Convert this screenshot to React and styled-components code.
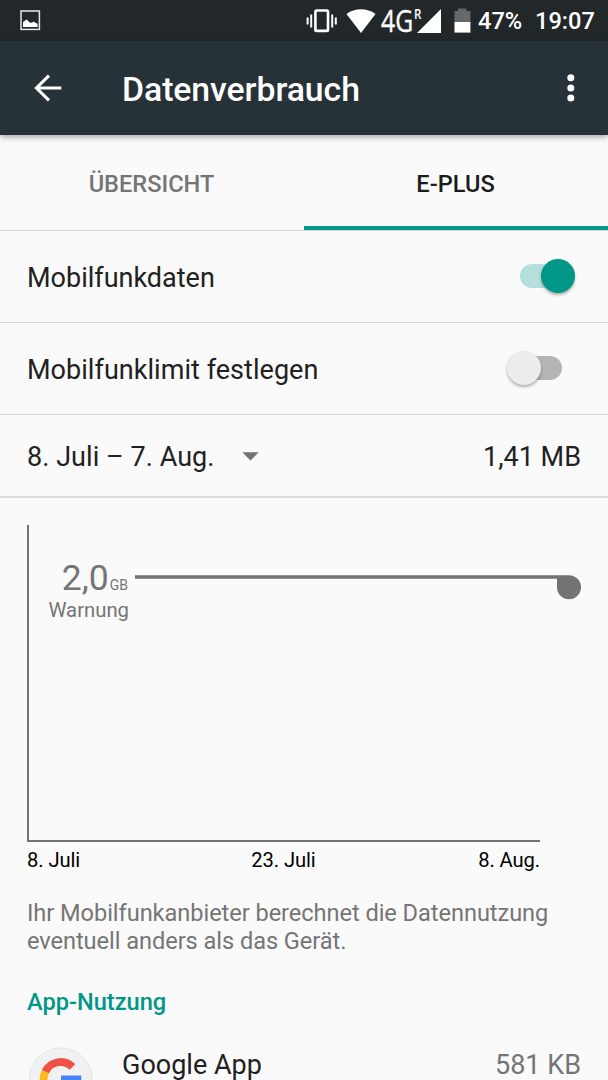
import React from "react";
import styled, { createGlobalStyle } from "styled-components";

const axisLabels = ["8. Juli", "23. Juli", "8. Aug."];

const App = () => {
  return (
    <>
      <GlobalStyle />
      <Screen>
        <StatusBar>
          <svg width="21" height="21" viewBox="0 0 21 21">
            <rect
              x="1"
              y="1"
              width="18.4"
              height="18.4"
              fill="none"
              stroke="#e6e7e7"
              strokeWidth="1.5"
            />
            <path
              d="M3 17V12L4.6 11L6.6 9.4L8.6 11.4L10.2 12.8L12.4 12.6L13.6 11.6L15.4 12.8L17.6 13.8V17Z"
              fill="#fff"
            />
          </svg>
          <StatusRight>
            <VibrateIcon />
            <WifiIcon />
            <Network>
              <Generation>4G</Generation>
              <Roaming>R</Roaming>
              <svg width="24" height="24" viewBox="0 0 24 24">
                <path d="M24 0V24H0Z" fill="#fff" />
              </svg>
            </Network>
            <BatteryIcon />
            <StatusText className="percent">47%</StatusText>
            <StatusText className="clock">19:07</StatusText>
          </StatusRight>
        </StatusBar>

        <Toolbar>
          <BackIcon width="28" height="28" viewBox="0 0 28 28">
            <path
              d="M15 1.6L2.4 14L15 26.4M2.4 14H27.4"
              fill="none"
              stroke="#fff"
              strokeWidth="3.1"
            />
          </BackIcon>
          <Title>Datenverbrauch</Title>
          <svg width="8" height="28" viewBox="0 0 8 28">
            <circle cx="3.8" cy="3.7" r="3.5" fill="#fff" />
            <circle cx="3.8" cy="13.9" r="3.5" fill="#fff" />
            <circle cx="3.8" cy="24" r="3.5" fill="#fff" />
          </svg>
        </Toolbar>

        <Tabs>
          <Tab>ÜBERSICHT</Tab>
          <Tab $active>E-PLUS</Tab>
        </Tabs>

        <Row>
          <RowText>Mobilfunkdaten</RowText>
          <Switch $on>
            <span />
          </Switch>
        </Row>
        <Row>
          <RowText $spacing="0.04px">Mobilfunklimit festlegen</RowText>
          <Switch>
            <span />
          </Switch>
        </Row>
        <CycleRow>
          <RowText $spacing="0.05px">8. Juli – 7. Aug.</RowText>
          <svg width="17" height="9" viewBox="0 0 17 9">
            <path d="M0.3 0.2H16.7L8.5 8.5Z" fill="#737373" />
          </svg>
          <Total>1,41 MB</Total>
        </CycleRow>

        <Chart>
          <Plot>
            <Limit>
              <LimitValue>
                2,0<small>GB</small>
              </LimitValue>
              <LimitName>Warnung</LimitName>
            </Limit>
            <Sweep width="446" height="25" viewBox="0 0 446 25">
              <path
                d="M0 0.3H434A12 12 0 1 1 422 12.3V3.7H0Z"
                fill="#737373"
              />
            </Sweep>
          </Plot>
          <Axis>
            {axisLabels.map((label) => (
              <span key={label}>{label}</span>
            ))}
          </Axis>
        </Chart>

        <Note>
          Ihr Mobilfunkanbieter berechnet die Datennutzung eventuell anders als
          das Gerät.
        </Note>
        <SectionTitle>App-Nutzung</SectionTitle>
        <AppRow>
          <GoogleIcon />
          <AppName>Google App</AppName>
          <AppUsage>581 KB</AppUsage>
        </AppRow>
      </Screen>
    </>
  );
};

const VibrateIcon = () => (
  <svg width="32" height="24" viewBox="0 0 32 24">
    <g fill="none" stroke="#fff">
      <rect x="9.4" y="1.5" width="12.6" height="20.4" rx="1.2" strokeWidth="2.6" />
      <path
        d="M1.6 8.5V15.5M5.2 5.5V18.5M26.2 5.5V18.5M29.8 8.5V15.5"
        strokeWidth="2"
      />
    </g>
  </svg>
);

const WifiIcon = () => (
  <svg className="wifi" width="30" height="24" viewBox="0 0 30 24">
    <path d="M0.5 5C9 -1.2 21 -1.2 29.5 5L15 24Z" fill="#fff" />
  </svg>
);

const BatteryIcon = () => (
  <svg className="battery" width="17" height="25" viewBox="0 0 17 25">
    <path d="M0.5 3H4V0.4H12.5V3H16.4V14H0.5Z" fill="#66696b" />
    <path d="M0.5 14H16.4V24.6H0.5Z" fill="#fff" />
  </svg>
);

const GoogleIcon = () => (
  <svg width="66" height="66" viewBox="0 0 66 66">
    <circle cx="32.7" cy="32.5" r="31.5" fill="#f1f1f1" stroke="#e6e6e6" />
    <g fill="none" strokeWidth="7.8">
      <path d="M17.4 39.4A17 17 0 0 1 17.4 24.6" stroke="#fbbc1a" />
      <path d="M17.4 24.6A17 17 0 0 1 44.6 19.9" stroke="#ef5145" />
      <path d="M44 44.7A17 17 0 0 1 17.4 39.4" stroke="#34a853" />
      <path d="M33 32.4H49.4A17 17 0 0 1 44 44.7" stroke="#4285f4" />
    </g>
  </svg>
);

export default App;

const GlobalStyle = createGlobalStyle`
  * {
    box-sizing: border-box;
  }
  body {
    margin: 0;
    background: #fafafa;
    font-family: Roboto, sans-serif;
  }
  svg {
    display: block;
    flex-shrink: 0;
  }
`;

const Screen = styled.div`
  width: 608px;
  height: 1080px;
  overflow: hidden;
  background: #fafafa;
  color: #212121;
`;

const StatusBar = styled.div`
  display: flex;
  align-items: center;
  justify-content: space-between;
  height: 41px;
  padding: 0 14px 0 20px;
  background: #22272a;
  color: #fff;
`;

const StatusRight = styled.div`
  display: flex;
  align-items: center;
  .wifi {
    margin-left: 8px;
  }
  .battery {
    margin: 0 7px 0 13px;
  }
  .percent {
    width: 57px;
  }
  .clock {
    width: 59px;
  }
`;

const StatusText = styled.span`
  font-size: 23.6px;
  font-weight: 500;
  line-height: 28px;
  margin-top: 1px;
  white-space: nowrap;
`;

const Network = styled.div`
  position: relative;
  display: flex;
  justify-content: flex-end;
  width: 65px;
`;

const Generation = styled.span`
  position: absolute;
  left: 5px;
  top: -8px;
  font-family: "Open Sans", sans-serif;
  font-size: 30.5px;
  line-height: 38px;
  -webkit-text-stroke: 0.4px #fff;
  transform: scaleX(0.81);
  transform-origin: left;
`;

const Roaming = styled.span`
  position: absolute;
  left: 38px;
  top: -3px;
  font-family: "Open Sans", sans-serif;
  font-size: 14px;
  font-weight: 600;
  line-height: 16px;
  transform: scaleX(0.83);
  transform-origin: left;
`;

const Toolbar = styled.div`
  position: relative;
  display: flex;
  align-items: center;
  height: 94px;
  padding: 0 33px;
  background: #273238;
  color: #fff;
  box-shadow: 0 2px 6px rgba(0, 0, 0, 0.35);
`;

const BackIcon = styled.svg`
  margin: 0 60px 0 1px;
`;

const Title = styled.h1`
  flex: 1;
  margin: 3px 0 0;
  font-size: 33.8px;
  font-weight: 500;
  line-height: 40px;
  letter-spacing: -0.07px;
`;

const Tabs = styled.div`
  display: flex;
  height: 96px;
  border-bottom: 1px solid #d6d6d6;
`;

const Tab = styled.div`
  flex: 1;
  padding: 35px 1px 0 0;
  font-size: 23.6px;
  font-weight: 500;
  line-height: 28px;
  text-align: center;
  color: ${(props) => (props.$active ? "#1c1c1c" : "#757575")};
  border-bottom: ${(props) => (props.$active ? "4px solid #009688" : "none")};
`;

const Row = styled.div`
  display: flex;
  align-items: center;
  justify-content: space-between;
  height: 92px;
  padding: 0 32px 0 27px;
  border-bottom: 1px solid #d6d6d6;
`;

const RowText = styled.span`
  margin-top: 2px;
  font-size: 27px;
  line-height: 32px;
  letter-spacing: ${(props) => props.$spacing || "normal"};
  white-space: nowrap;
`;

const Switch = styled.div`
  display: flex;
  align-items: center;
  justify-content: ${(props) => (props.$on ? "flex-end" : "flex-start")};
  width: 43px;
  height: 24px;
  margin: 0 ${(props) => (props.$on ? "13px" : "14px")} 1px 0;
  border-radius: 12px;
  background: ${(props) => (props.$on ? "#b5dfdb" : "#b4b6b5")};
  span {
    flex-shrink: 0;
    width: 34px;
    height: 34px;
    margin: ${(props) => (props.$on ? "0 -12px 0 0" : "0 0 0 -12px")};
    border-radius: 50%;
    background: ${(props) => (props.$on ? "#009688" : "#ececec")};
    box-shadow: 0 2px 3px rgba(0, 0, 0, 0.3);
  }
`;

const CycleRow = styled.div`
  display: flex;
  align-items: center;
  height: 83px;
  padding: 0 27px;
  border-bottom: 2px solid #dcdcdc;
  svg {
    margin: 2px 0 0 27px;
  }
`;

const Total = styled(RowText)`
  margin-left: auto;
`;

const Chart = styled.div`
  padding: 27px 27px 0;
`;

const Plot = styled.div`
  display: flex;
  width: 513px;
  height: 317px;
  padding-top: 33px;
  border-left: 2px solid #737373;
  border-bottom: 2px solid #737373;
`;

const Limit = styled.div`
  width: 99px;
  flex-shrink: 0;
  color: #757575;
  text-align: right;
`;

const LimitValue = styled.div`
  font-size: 35.5px;
  line-height: 40px;
  small {
    margin-left: 1px;
    font-size: 14px;
  }
`;

const LimitName = styled.div`
  margin: -7px -1px 0 0;
  font-size: 20.3px;
  line-height: 24px;
`;

const Sweep = styled.svg`
  margin: 17px 0 0 7px;
`;

const Axis = styled.div`
  display: grid;
  grid-template-columns: repeat(3, 1fr);
  width: 513px;
  margin-top: 6px;
  font-size: 20.2px;
  line-height: 24px;
  letter-spacing: -0.1px;
  color: #000;
  span:nth-child(2) {
    text-align: center;
  }
  span:last-child {
    text-align: right;
  }
`;

const Note = styled.p`
  margin: 27px 27px 0;
  font-size: 23.6px;
  line-height: 28px;
  letter-spacing: -0.055px;
  color: #757575;
`;

const SectionTitle = styled.h2`
  margin: 33px 27px 0;
  font-size: 23.6px;
  font-weight: 500;
  line-height: 28px;
  color: #009688;
`;

const AppRow = styled.div`
  display: flex;
  align-items: flex-start;
  margin-top: 31px;
  padding: 0 27px 0 28px;
`;

const AppName = styled(RowText)`
  flex: 1;
  margin: 2px 0 0 28px;
`;

const AppUsage = styled(RowText)`
  margin-top: 2px;
  color: #757575;
`;
